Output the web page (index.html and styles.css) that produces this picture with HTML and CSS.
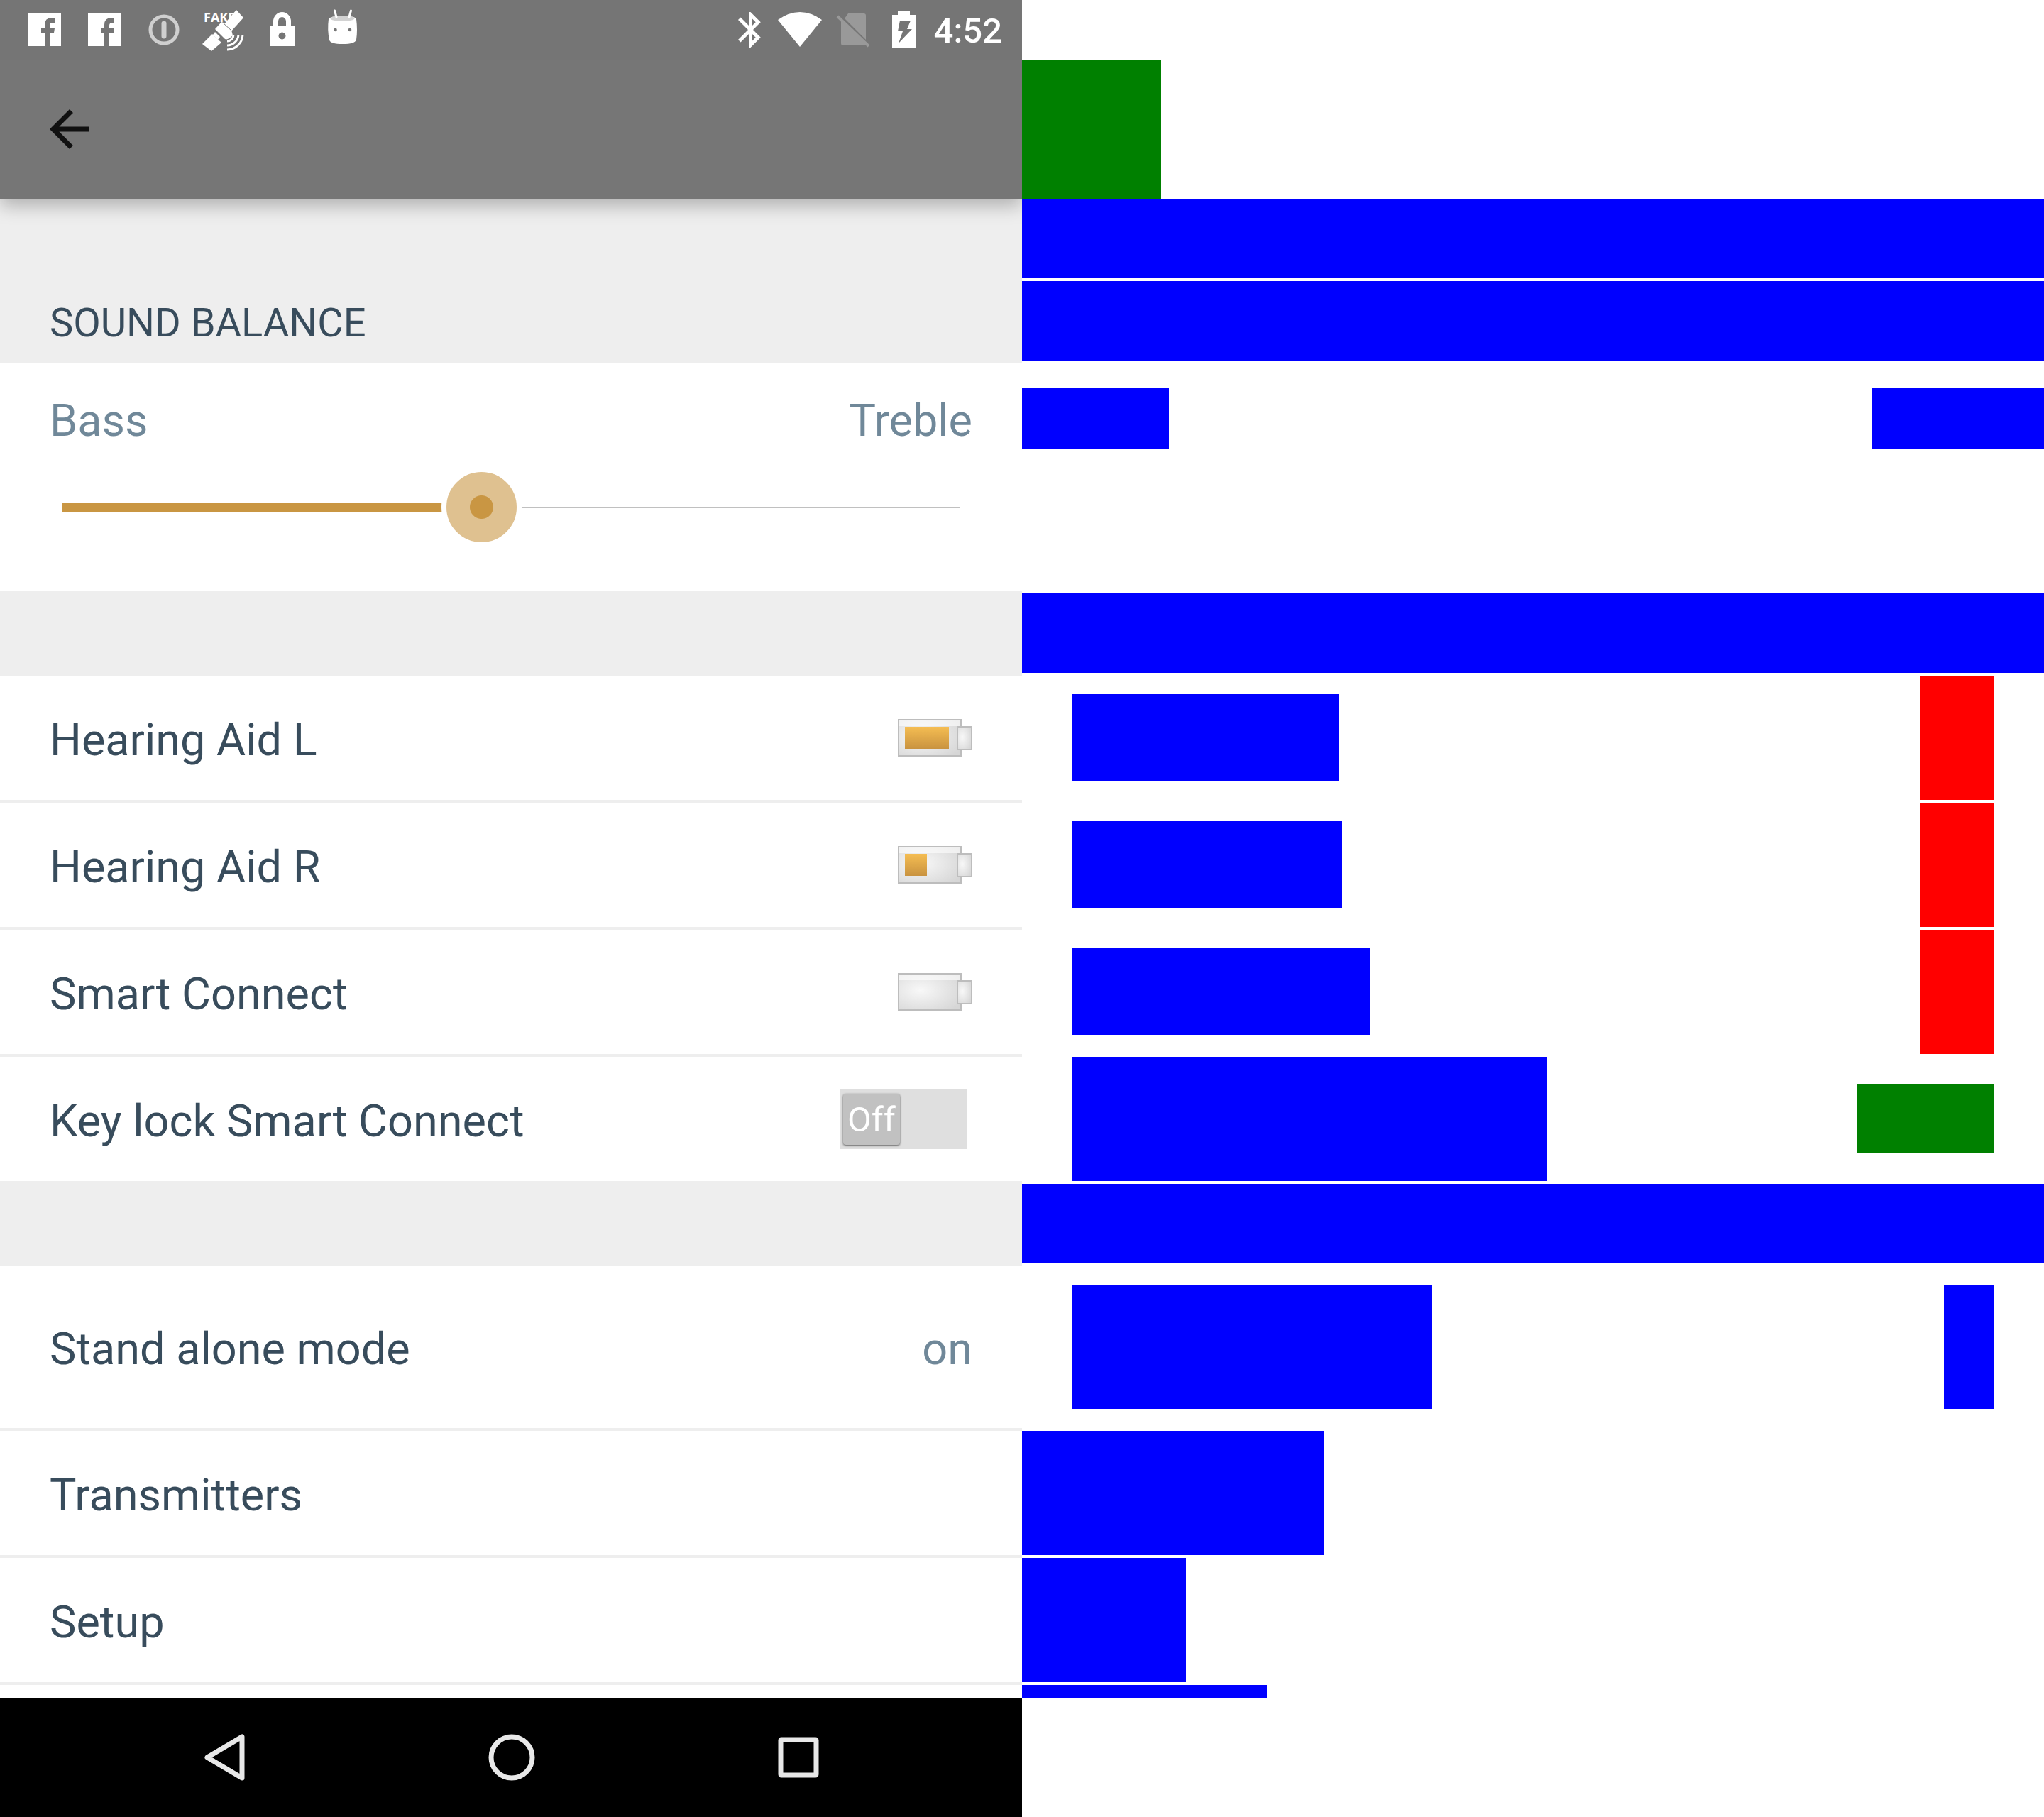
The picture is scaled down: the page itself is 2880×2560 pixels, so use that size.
FILE: index.html
```html
<!DOCTYPE html>
<html lang="en">
<head>
<meta charset="utf-8">
<meta name="viewport" content="width=device-width, initial-scale=1">
<title>Sound settings</title>
<link rel="stylesheet" href="styles.css">
</head>
<body>
<main class="split">
  <section class="pane screen">
    <header class="statusbar">
      <div class="notifications">
        <svg class="note" viewBox="0 0 84 84"><path d="M19 19H65V65H49V46H55L56 40H49V36Q49 32 53 32H56V25H52Q42 25 42 35V40H37V46H42V65H19Z"/></svg>
        <svg class="note" viewBox="0 0 84 84"><path d="M19 19H65V65H49V46H55L56 40H49V36Q49 32 53 32H56V25H52Q42 25 42 35V40H37V46H42V65H19Z"/></svg>
        <svg class="note" viewBox="0 0 84 84"><g fill="none" stroke="#cfcfcf"><circle cx="42" cy="42" r="19" stroke-width="5"/><path d="M42 33V51" stroke-width="7" stroke-linecap="round"/></g></svg>
        <svg class="note" viewBox="0 0 84 84">
          <text class="note-text" x="14" y="31">FAKE</text>
          <path d="M60 14L70 25L52 45L42 35Z"/>
          <path d="M39 31L30 41L44 55Q48 57 55 50L53 42L42 32Z"/>
          <path d="M26 48L39 60L25 72L12 62Z"/>
          <path d="M30 45L37 52L34 56L27 49Z"/>
          <path d="M41 32L53 43M29 42L42 55" fill="none" stroke="#757575" stroke-width="1"/>
          <g fill="none" stroke="#fff" stroke-width="3"><path d="M69 49A22 22 0 0 1 47 70"/><path d="M63 49A16 16 0 0 1 47 64"/><path d="M56 49A9 9 0 0 1 47 58"/></g>
        </svg>
        <svg class="note" viewBox="0 0 84 84"><path fill-rule="evenodd" d="M23 36H58V65H23ZM40.500 45.500a5 5 0 1 0 .01 0Z"/><path d="M31.500 37V30a9 9.500 0 0 1 18 0V37" fill="none" stroke="#fff" stroke-width="7"/></svg>
        <svg class="note" viewBox="0 0 84 84"><path d="M22 27Q23 23 42 22Q61 23 61 27Q63 42 61 56Q59 62 42 62Q24 62 23 56Q20 42 22 27Z"/><ellipse cx="41.500" cy="26" rx="17" ry="4" fill="#d2d2d2"/><path d="M30.500 15L33 24M53.500 15L51 24" stroke="#fff" stroke-width="3" stroke-linecap="round"/><circle cx="31.500" cy="42" r="2.300" fill="#757575"/><circle cx="52" cy="42" r="2.300" fill="#757575"/></svg>
      </div>
      <div class="system">
        <svg class="sys" viewBox="0 0 72 84"><path transform="translate(7.500 12) scale(2.500)" d="M17.710 7.710L12 2h-1v7.590L6.410 5 5 6.410 10.590 12 5 17.590 6.410 19 11 14.410V22h1l5.710-5.710-4.300-4.290 4.300-4.290zM13 5.830l1.880 1.880L13 9.590V5.830zm1.880 10.460L13 18.170v-3.760l1.880 1.880z"/></svg>
        <svg class="sys" viewBox="0 0 72 84"><path d="M4 28Q35 6 66 28L35 66Z"/></svg>
        <svg class="sys" viewBox="0 0 72 84"><path fill="#999" d="M31 19H53Q56 19 56 22V56L26 26ZM21 28L56 63Q55 64 53 64H24Q21 64 21 61Z"/><path d="M16 23L60 65" stroke="#999" stroke-width="4"/></svg>
        <svg class="sys" viewBox="0 0 72 84"><path fill-rule="evenodd" d="M29 16H46V21H54V67H21V21H29ZM32 29L29 44H36L30 61L49 41H42L47 29Z"/></svg>
        <time class="clock">4:52</time>
      </div>
    </header>
    <nav class="toolbar">
      <button class="back" type="button" aria-label="Back"><svg class="back-icon" viewBox="0 0 24 24"><path d="M20 11H7.830l5.590-5.590L12 4l-8 8 8 8 1.410-1.410L7.830 13H20v-2z"/></svg></button>
    </nav>
    <div class="content">
      <div class="band"></div>
      <h2 class="band">SOUND BALANCE</h2>
      <div class="balance">
        <div class="balance-labels"><label for="balance">Bass</label><label for="balance">Treble</label></div>
        <input class="slider" id="balance" type="range" min="0" max="1000" value="464">
      </div>
      <div class="band"></div>
      <div class="row"><span class="label">Hearing Aid L</span>
        <svg class="battery" viewBox="0 0 106 53">
          <defs>
            <radialGradient id="shell" cx=".35" cy=".45" r=".75"><stop offset="0" stop-color="#f8f8f8"/><stop offset="1" stop-color="#d6d6d6"/></radialGradient>
            <linearGradient id="charge" x2="0" y2="1"><stop offset="0" stop-color="#f5bd52"/><stop offset="1" stop-color="#c99340"/></linearGradient>
          </defs>
          <rect class="case" x="2" y="1" width="88" height="51"/><rect class="gloss" x="3" y="2" width="86" height="8"/><rect class="case" x="85" y="11" width="20" height="32"/><rect class="cell" x="11" y="11" width="62" height="31"/>
        </svg>
      </div>
      <div class="row"><span class="label">Hearing Aid R</span>
        <svg class="battery" viewBox="0 0 106 53"><rect class="case" x="2" y="1" width="88" height="51"/><rect class="gloss" x="3" y="2" width="86" height="8"/><rect class="case" x="85" y="11" width="20" height="32"/><rect class="cell" x="11" y="11" width="31" height="31"/></svg>
      </div>
      <div class="row"><span class="label">Smart Connect</span>
        <svg class="battery" viewBox="0 0 106 53"><rect class="case" x="2" y="1" width="88" height="51"/><rect class="gloss" x="3" y="2" width="86" height="8"/><rect class="case" x="85" y="11" width="20" height="32"/></svg>
      </div>
      <div class="row"><label class="label" for="keylock">Key lock Smart Connect</label>
        <label class="switch"><input class="switch-input" id="keylock" type="checkbox" role="switch"><span class="switch-thumb">Off</span></label>
      </div>
      <div class="band"></div>
      <div class="row row-tall"><span class="label">Stand alone mode</span><span class="label value">on</span></div>
      <a class="row" href="#transmitters"><span class="label">Transmitters</span></a>
      <a class="row" href="#setup"><span class="label">Setup</span></a>
      <div class="row"></div>
    </div>
    <nav class="navbar">
      <button class="nav-button" type="button" aria-label="Back"><svg class="nav-icon" viewBox="0 0 84 84"><path d="M66 13V71L17 42Z"/></svg></button>
      <button class="nav-button" type="button" aria-label="Home"><svg class="nav-icon" viewBox="0 0 84 84"><circle cx="42" cy="42" r="29"/></svg></button>
      <button class="nav-button" type="button" aria-label="Recent apps"><svg class="nav-icon" viewBox="0 0 84 84"><rect x="17" y="17" width="50" height="50" rx="1"/></svg></button>
    </nav>
  </section>

  <section class="pane wireframe" aria-hidden="true">
    <div class="statusbar"></div>
    <div class="toolbar"><div class="box control w-back"></div></div>
    <div class="content">
      <div class="band box text"></div>
      <div class="band box text"></div>
      <div class="balance"><div class="box text w-bass"></div><div class="box text w-treble"></div></div>
      <div class="band box text"></div>
      <div class="row"><div class="box text short w-left"></div><div class="box image"></div></div>
      <div class="row"><div class="box text short w-right"></div><div class="box image"></div></div>
      <div class="row"><div class="box text short w-smart"></div><div class="box image"></div></div>
      <div class="row"><div class="box text w-keylock"></div><div class="box control toggle"></div></div>
      <div class="band box text"></div>
      <div class="row row-tall"><div class="box text tall w-mode"></div><div class="box text tall w-on"></div></div>
      <div class="row flush"><div class="box text w-transmitters"></div></div>
      <div class="row flush"><div class="box text w-setup"></div></div>
      <div class="row flush"><div class="box text w-last"></div></div>
    </div>
    <div class="navbar"></div>
  </section>
</main>
</body>
</html>
```
FILE: styles.css
```css
* { box-sizing: border-box; }

body {
  margin: 0;
  background: #fff;
  font-family: Roboto, "Liberation Sans", sans-serif;
  color: #384c5c;
}

button {
  padding: 0;
  border: 0;
  background: none;
}

svg { display: block; flex: none; }

.split {
  display: grid;
  grid-template-columns: 1fr 1fr;
  height: 100vh;
}

.pane {
  display: flex;
  flex-direction: column;
  min-width: 0;
  min-height: 0;
  overflow: hidden;
}

/* Status bar */
.statusbar {
  display: flex;
  flex: none;
  justify-content: space-between;
  height: 84px;
  padding: 0 28px 0 21px;
}

.screen .statusbar {
  position: relative;
  z-index: 2;
  background: #757575;
}

.notifications,
.system {
  display: flex;
  align-items: center;
  fill: #fff;
}

.note { width: 84px; height: 84px; }

.note-text {
  font-family: "Open Sans", sans-serif;
  font-size: 18px;
  font-weight: 700;
}

.sys { width: 72px; height: 84px; }

.clock {
  padding: 4px 0 0 8px;
  color: #fff;
  font-size: 49px;
  font-weight: 500;
  line-height: 56px;
}

/* Toolbar */
.toolbar {
  flex: none;
  height: 196px;
}

.screen .toolbar {
  position: relative;
  z-index: 1;
  background: #767676;
  box-shadow: 0 10px 24px rgba(0, 0, 0, .26);
}

.back {
  display: grid;
  place-items: center;
  width: 196px;
  height: 196px;
}

.back-icon {
  width: 84px;
  height: 84px;
  fill: #111;
}

/* List */
.content {
  flex: 1;
  min-height: 0;
  overflow: hidden;
}

.band {
  display: flex;
  align-items: flex-end;
  height: 116px;
  margin: 0;
  padding: 0 70px 25px;
  background: #eee;
  font-size: 56px;
  font-weight: 400;
  line-height: 64px;
}

.balance {
  height: 324px;
  border-bottom: 4px solid #eee;
}

.screen .balance { padding: 39px 70px 0; }

.balance-labels {
  display: flex;
  justify-content: space-between;
  color: #708899;
  font-size: 63px;
  line-height: 84px;
}

.slider {
  display: block;
  width: calc(100% - 36px);
  height: 113px;
  margin: 23px 18px 0;
  appearance: none;
  background:
    linear-gradient(#c99643, #c99643) left center / 46% 12px no-repeat,
    linear-gradient(#c0c0c0, #c0c0c0) center / 100% 2px no-repeat;
}

.slider::-webkit-slider-thumb {
  width: 113px;
  height: 113px;
  appearance: none;
  border: 7px solid #fff;
  border-radius: 50%;
  background: radial-gradient(circle, #c99643 16px, #dfc190 17px);
}

.row {
  display: flex;
  align-items: center;
  justify-content: space-between;
  height: 179px;
  padding: 0 70px;
  border-bottom: 4px solid #eee;
  color: inherit;
  text-decoration: none;
}

.row-tall { height: 232px; }

.label {
  padding-top: 6px;
  font-size: 63px;
  line-height: 84px;
}

.value { color: #708899; }

.battery { width: 106px; height: 53px; }

.case {
  fill: url(#shell);
  stroke: #bdbdbd;
  stroke-width: 2;
}

.gloss { fill: #fff; fill-opacity: .6; }
.cell { fill: url(#charge); }

.switch {
  position: relative;
  display: flex;
  width: 180px;
  height: 84px;
  margin-right: 7px;
  padding: 6px 5px;
  background: #dfdfdf;
}

.switch-input {
  position: absolute;
  inset: 0;
  width: 100%;
  height: 100%;
  margin: 0;
  opacity: 0;
}

.switch-thumb {
  width: 80px;
  height: 72px;
  border-radius: 4px;
  background: #c1c1c1;
  box-shadow: 0 1px 3px rgba(0, 0, 0, .6);
  color: #fff;
  font-size: 49px;
  line-height: 74px;
  text-align: center;
}

/* Navigation bar */
.navbar {
  display: grid;
  flex: none;
  grid-template-columns: repeat(3, 1fr);
  height: 168px;
  padding: 0 113px 0 115px;
}

.screen .navbar { background: #000; }

.nav-button {
  display: grid;
  place-items: center;
}

.nav-icon {
  width: 84px;
  height: 84px;
  fill: none;
  stroke: #e8e8e8;
  stroke-width: 7;
  stroke-linejoin: round;
}

/* Wireframe: blue for text, red for images, green for controls */
.wireframe .band,
.wireframe .balance,
.wireframe .row { border-bottom: 4px solid #fff; }

.wireframe .balance {
  display: flex;
  align-items: flex-start;
  justify-content: space-between;
  padding-top: 35px;
}

.wireframe .row { align-items: flex-start; }
.wireframe .flush { padding: 0; }

.box { height: 175px; }
.text { background: #00f; }
.image { width: 105px; background: #f00; }
.control { background: #008000; }
.short { height: 122px; margin-top: 26px; }
.tall { margin-top: 26px; }
.toggle { width: 194px; height: 98px; margin-top: 38px; }
.band.box { height: 116px; }
.balance .box { height: 85px; }

.w-back { width: 196px; height: 196px; }
.w-bass { width: 207px; }
.w-treble { width: 242px; }
.w-left { width: 376px; }
.w-right { width: 381px; }
.w-smart { width: 420px; }
.w-keylock { width: 670px; }
.w-mode { width: 508px; }
.w-on { width: 71px; }
.w-transmitters { width: 425px; }
.w-setup { width: 231px; }
.w-last { width: 345px; }
```
